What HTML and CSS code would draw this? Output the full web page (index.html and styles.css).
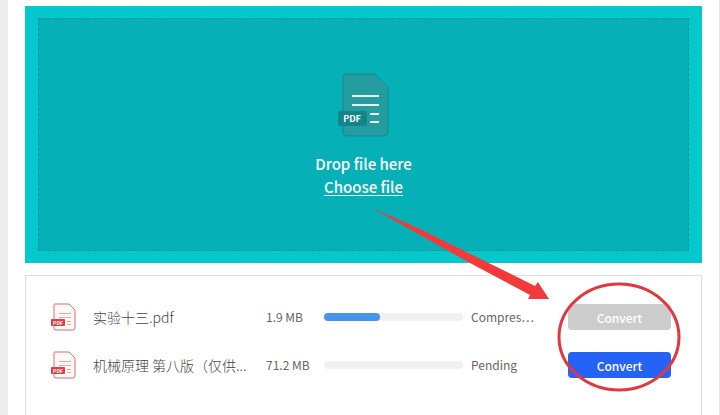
FILE: index.html
```
<!DOCTYPE html>
<html lang="en">

<head>
    <meta charset="UTF-8">
    <meta name="viewport" content="width=device-width, initial-scale=1.0">
    <title>PDF Converter</title>
    <link rel="stylesheet" href="styles.css">
</head>

<body>
    <main class="page">
        <section class="dropzone">
            <div class="dropArea">
                <svg class="dropIcon" viewBox="0 0 52 64" aria-hidden="true">
                    <path d="M8 1H37L50 14V59Q50 63 46 63H9Q5 63 5 59V4Q5 1 8 1Z" fill="#259da0" stroke="#16878b" />
                    <path d="M14 23H41M14 32H41M32 41H41M32 49H41" stroke="#e6fafa" stroke-width="2" fill="none" />
                    <rect x="0" y="38" width="29" height="15" rx="2" fill="#138589" />
                    <text x="14" y="49" class="dropBadge">PDF</text>
                </svg>
                <p class="dropText">Drop file here</p>
                <a class="chooseFile" href="#">Choose file</a>
            </div>
        </section>

        <section class="fileList">
            <div class="fileRow">
                <svg class="fileIcon" viewBox="0 0 26 28" aria-hidden="true">
                    <path d="M4 1H18L24 7V25Q24 27 22 27H5Q3 27 3 25V2Q3 1 4 1Z" fill="#fffafa" stroke="#dc6a73" />
                    <path d="M8 10.5H20M8 14.5H20M16 18.5H20M16 21.5H20" stroke="#e3a5aa" fill="none" />
                    <rect x="0" y="16" width="14" height="7" rx="1" fill="#e23b40" />
                    <text x="7" y="22" class="fileBadge">PDF</text>
                </svg>
                <span class="fileName">实验十三.pdf</span>
                <span class="fileSize">1.9 MB</span>
                <div class="progress">
                    <div class="progressFill" style="width: 40%"></div>
                </div>
                <span class="fileStatus">Compres…</span>
                <button class="convert" disabled>Convert</button>
            </div>

            <div class="fileRow">
                <svg class="fileIcon" viewBox="0 0 26 28" aria-hidden="true">
                    <path d="M4 1H18L24 7V25Q24 27 22 27H5Q3 27 3 25V2Q3 1 4 1Z" fill="#fffafa" stroke="#dc6a73" />
                    <path d="M8 10.5H20M8 14.5H20M16 18.5H20M16 21.5H20" stroke="#e3a5aa" fill="none" />
                    <rect x="0" y="16" width="14" height="7" rx="1" fill="#e23b40" />
                    <text x="7" y="22" class="fileBadge">PDF</text>
                </svg>
                <span class="fileName">机械原理 第八版（仅供...</span>
                <span class="fileSize">71.2 MB</span>
                <div class="progress"></div>
                <span class="fileStatus">Pending</span>
                <button class="convert">Convert</button>
            </div>
        </section>
    </main>

    <!-- arrow and circle pointing at the convert buttons -->
    <svg class="marker" viewBox="0 0 360 200" aria-hidden="true">
        <path d="M12 8L60 29L175 86L178 82L189 99H168L170 95L110 63Z" fill="#f23a3a" />
        <ellipse cx="259" cy="137" rx="60" ry="53" fill="none" stroke="#e0383f" stroke-width="3" />
    </svg>
</body>

</html>
```

FILE: styles.css
```
* {
    margin: 0px;
    padding: 0px;
    box-sizing: border-box;
}

body {
    background-color: #ededed;
    font-family: "Noto Sans CJK KR", "Noto Sans CJK SC", sans-serif;
    font-size: 12px;
    line-height: 20px;
    color: #666666;
    position: relative;
}

.page {
    display: flex;
    flex-direction: column;
    gap: 12px;
    min-height: 100vh;
    margin-left: 8px;
    padding: 6px 17px 0px;
    background-color: white;
    border-right: 1px solid #e6e6e6;
}

.dropzone {
    padding: 12px 13px;
    background-color: #04c8cc;
}

.dropArea {
    display: flex;
    flex-direction: column;
    align-items: center;
    padding: 54px 20px 52px;
    background-color: #05b1b6;
    border: 1px dashed #07989d;
    font-size: 15px;
    font-weight: 500;
    line-height: 23px;
    color: white;
}

.dropIcon {
    width: 52px;
    height: 64px;
    margin-bottom: 15px;
}

.dropBadge {
    font-size: 9px;
    font-weight: bold;
    fill: white;
    text-anchor: middle;
}

.chooseFile {
    color: white;
    text-underline-offset: 2px;
}

.fileList {
    flex: 1;
    display: flex;
    flex-direction: column;
    gap: 20px;
    padding: 27px 30px 20px 25px;
    border: 1px solid #dfdfdf;
    border-bottom: none;
}

.fileRow {
    display: grid;
    grid-template-columns: 34px 165px 50px 1fr 89px 103px;
    column-gap: 8px;
    align-items: center;
}

.fileIcon {
    width: 26px;
    height: 28px;
}

.fileBadge {
    font-size: 5px;
    font-weight: bold;
    fill: white;
    text-anchor: middle;
}

.fileName {
    font-family: "Noto Sans CJK SC", sans-serif;
    font-size: 14px;
    font-weight: 300;
    color: #444444;
}

.fileName,
.fileSize,
.fileStatus {
    white-space: nowrap;
}

.progress {
    height: 8px;
    border-radius: 4px;
    background-color: #f1f1f1;
}

.progressFill {
    height: 8px;
    border-radius: 4px;
    background-color: #4596ea;
}

.convert {
    height: 26px;
    border: none;
    border-radius: 4px;
    background-color: #2463f6;
    color: white;
    font-family: inherit;
    font-size: 12px;
    font-weight: 500;
    cursor: pointer;
}

.convert:disabled {
    background-color: #cccccc;
    cursor: default;
}

.marker {
    position: absolute;
    top: 200px;
    right: 0px;
    width: 360px;
    height: 200px;
    pointer-events: none;
}
```
